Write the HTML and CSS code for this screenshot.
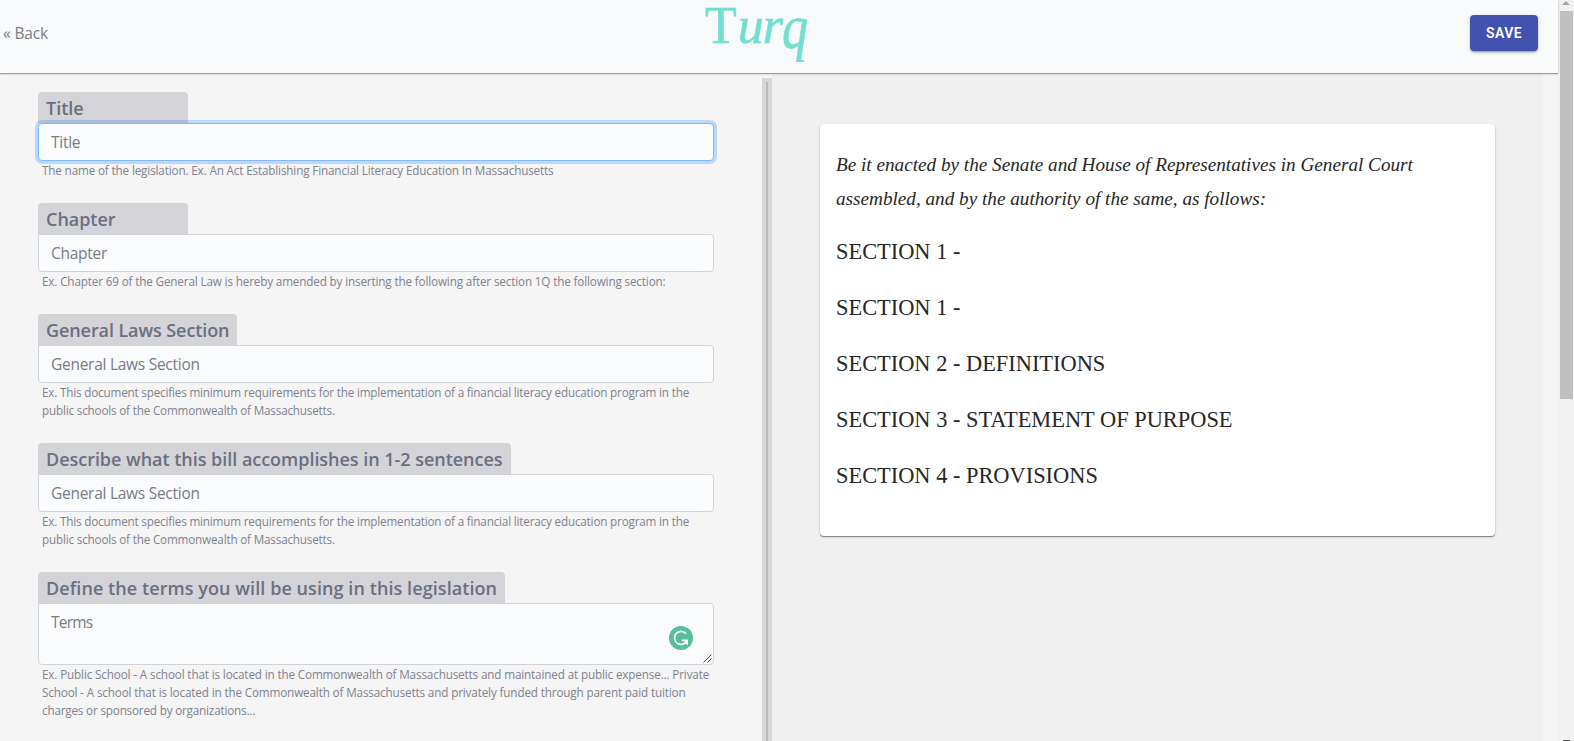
FILE: index.html
```html
<!DOCTYPE html>
<html lang="en">
<head>
<meta charset="utf-8">
<title>Turq</title>
<link rel="stylesheet" href="styles.css">
</head>
<body>
<div class="page">
  <header class="header">
    <a class="back">« Back</a>
    <div class="logo">T<em>ur<span class="tail">q</span></em></div>
    <button class="save">SAVE</button>
  </header>
  <main class="split">
    <form class="form">
      <div class="field">
        <label class="label">Title</label>
        <div class="input focused">Title</div>
        <p class="help">The name of the legislation. Ex. An Act Establishing Financial Literacy Education In Massachusetts</p>
      </div>
      <div class="field">
        <label class="label">Chapter</label>
        <div class="input">Chapter</div>
        <p class="help">Ex. Chapter 69 of the General Law is hereby amended by inserting the following after section 1Q the following section:</p>
      </div>
      <div class="field">
        <label class="label short">General Laws Section</label>
        <div class="input">General Laws Section</div>
        <p class="help wide">Ex. This document specifies minimum requirements for the implementation of a financial literacy education program in the<br>public schools of the Commonwealth of Massachusetts.</p>
      </div>
      <div class="field">
        <label class="label">Describe what this bill accomplishes in 1-2 sentences</label>
        <div class="input">General Laws Section</div>
        <p class="help wide">Ex. This document specifies minimum requirements for the implementation of a financial literacy education program in the<br>public schools of the Commonwealth of Massachusetts.</p>
      </div>
      <div class="field">
        <label class="label long">Define the terms you will be using in this legislation</label>
        <div class="input area"><span class="terms">Terms</span>
          <svg class="badge" viewBox="0 0 24 24"><circle cx="12" cy="12" r="12" fill="#55bf9a"/><path d="M17 7.8A6.5 6.5 0 1 0 17.6 15.2M12.8 14.4h5.3v4.3" fill="none" stroke="#fff" stroke-width="1.7"/></svg>
          <svg class="grip" viewBox="0 0 9 9"><path d="M.5 8.5l8-8M4.5 8.5l4-4" fill="none" stroke="#444" stroke-width="1"/></svg>
        </div>
        <p class="help loose">Ex. Public School - A school that is located in the Commonwealth of Massachusetts and maintained at public expense... Private<br>School - A school that is located in the Commonwealth of Massachusetts and privately funded through parent paid tuition<br><span class="last">charges or sponsored by organizations...</span></p>
      </div>
    </form>
    <div class="resizer"><span></span></div>
    <section class="preview">
      <article class="card">
        <p class="enact">Be it enacted by the Senate and House of Representatives in General Court<br>assembled, and by the authority of the same, as follows:</p>
        <h2>SECTION 1 -</h2>
        <h2>SECTION 1 -</h2>
        <h2>SECTION 2 - DEFINITIONS</h2>
        <h2>SECTION 3 - STATEMENT OF PURPOSE</h2>
        <h2>SECTION 4 - PROVISIONS</h2>
      </article>
    </section>
  </main>
</div>
<div class="scrollbar">
  <svg class="up" viewBox="0 0 8 4"><path d="M0 4L4 0L8 4z" fill="#a3a3a3"/></svg>
  <div class="thumb"></div>
  <div class="down"></div>
</div>
</body>
</html>
```
FILE: styles.css
```css
* { box-sizing: border-box; }
body {
  margin: 0;
  height: 741px;
  overflow: hidden;
  display: flex;
  background: #f5f5f5;
  font-family: "Open Sans", sans-serif;
}
.page { width: 1558px; height: 741px; display: flex; flex-direction: column; }

.header {
  flex: none;
  height: 73px;
  display: grid;
  grid-template-columns: 705px 1fr 88px;
  background: #f8fafc;
  box-shadow: 0 1px 1px rgba(0, 0, 0, .3), 0 1px 3px rgba(0, 0, 0, .12);
  z-index: 1;
}
.back { padding: 21px 0 0 3px; font-size: 15.5px; line-height: 24px; letter-spacing: -.15px; color: #7c7d82; }
.logo {
  font: 52px/52px "Liberation Serif", serif;
  color: #72dfd0;
  -webkit-text-stroke: .6px #72dfd0;
}
.logo em { letter-spacing: -1px; margin-left: 1px; }
/* the q is drawn taller from the x-height down */
.tail { display: inline-block; transform: scaleY(1.2); transform-origin: 0 20px; }
.save {
  margin: 15px 0 0;
  width: 68px;
  height: 36px;
  padding: 0;
  border: 0;
  border-radius: 4px;
  background: #4153af;
  color: #fff;
  font: 600 14px/35px Roboto, sans-serif;
  letter-spacing: .4px;
  box-shadow: 0 3px 1px -2px rgba(0, 0, 0, .2), 0 2px 2px rgba(0, 0, 0, .14), 0 1px 5px rgba(0, 0, 0, .12);
}

.split { flex: 1; min-height: 0; display: flex; width: 1543px; }
.form { width: 762px; padding: 19px 48px 0 38px; }
.field { margin-bottom: 24px; }
.label {
  display: block;
  width: fit-content;
  min-width: 150px;
  height: 31px;
  padding: 0 8px;
  border-radius: 4px 4px 0 0;
  background: #d4d3d8;
  color: #6a7080;
  font-size: 18px;
  font-weight: 600;
  line-height: 32px;
  letter-spacing: -.03px;
  white-space: nowrap;
}
.label.short { letter-spacing: -.09px; }
.label.long { letter-spacing: .075px; }
.input {
  position: relative;
  height: 38px;
  padding: 6px 12px;
  border: 1px solid #ced4da;
  border-radius: 0 4px 4px 4px;
  background: #fafbfd;
  color: #777b82;
  font-size: 15.5px;
  line-height: 24px;
  letter-spacing: -.27px;
}
.focused { border-color: #85b8fa; border-radius: 4px; box-shadow: 0 0 0 3px rgba(0, 123, 255, .23); }
.area { height: 62px; }
.terms { letter-spacing: -.8px; }
.badge { position: absolute; right: 20px; top: 22px; width: 24px; height: 24px; }
.grip { position: absolute; right: 1px; bottom: 1px; width: 9px; height: 9px; }
.help {
  margin: 0;
  padding-left: 4px;
  font-size: 11.7px;
  line-height: 18px;
  letter-spacing: -.145px;
  color: #80828f;
  white-space: nowrap;
}
.help.wide { letter-spacing: -.18px; }
.help.loose { letter-spacing: -.14px; }
.help.loose .last { letter-spacing: -.18px; }

.resizer { width: 10px; margin-top: 5px; padding: 4px 4px 0; background: #d7d7d7; display: flex; }
.resizer span { width: 2px; background: #b9b9b9; }

.preview { width: 771px; padding: 51px 48px 0; background: #f0f0f0; }
.card {
  padding: 24px 16px;
  height: 412px;
  border-radius: 4px;
  background: #fff;
  color: #262626;
  font-family: "Liberation Serif", serif;
  box-shadow: 0 1px 1px rgba(0, 0, 0, .4), 0 1px 3px rgba(0, 0, 0, .16);
}
.enact { margin: 0 0 16px; font-size: 19.2px; line-height: 34px; font-style: italic; white-space: nowrap; }
.card h2 { margin: 0 0 16px; font-size: 22.4px; font-weight: 400; line-height: 40px; }

.scrollbar { width: 16px; height: 741px; padding: 1px 1px 0 2px; background: #f1f1f1; display: flex; flex-direction: column; }
.up { width: 8px; height: 4px; margin-left: 2px; }
.thumb { height: 388px; margin-top: 6px; background: #c0c0c0; }
.down { height: 1px; width: 7px; margin: auto 0 0 3px; background: #505050; }
```
